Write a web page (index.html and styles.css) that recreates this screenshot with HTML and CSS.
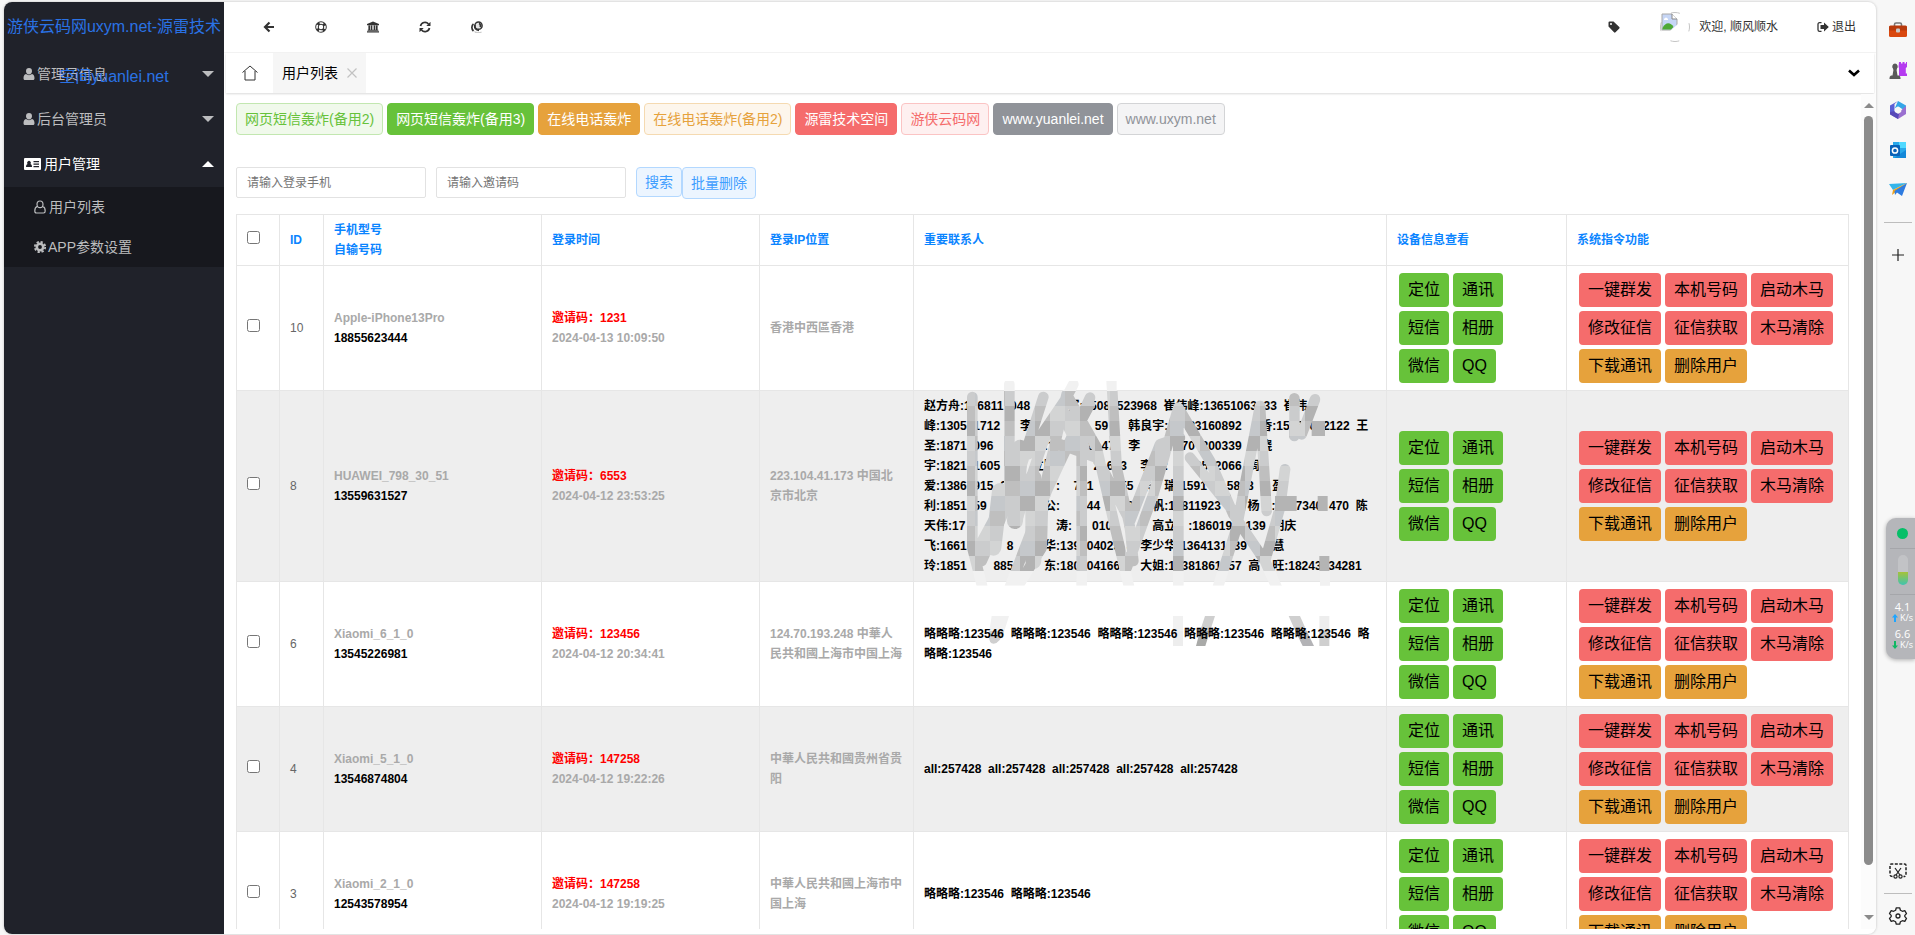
FILE: index.html
```html
<!DOCTYPE html>
<html lang="zh-CN">
<head>
<meta charset="utf-8">
<title>用户列表</title>
<link rel="stylesheet" href="styles.css">
</head>
<body>
<div class="app">
  <aside class="side">
    <div class="logo">游侠云码网uxym.net-源雷技术空间yuanlei.net</div>
    <nav class="menu">
      <a class="item" href="#"><svg class="ico" viewBox="0 0 12 14"><path d="M6 1a3 3.2 0 0 1 3 3.2C9 6 7.700 7.500 6 7.500S3 6 3 4.200A3 3.200 0 0 1 6 1zM3 7c1.800 1.500 4.200 1.500 6 0 1.800.5 2.500 2 2.500 4.200 0 1.300-.7 1.800-1.800 1.800H2.300C1.200 13 .5 12.500.5 11.200.5 9 1.200 7.500 3 7z"/></svg><span>管理员信息</span><i class="tri"></i></a>
      <a class="item" href="#"><svg class="ico" viewBox="0 0 12 14"><path d="M6 1a3 3.2 0 0 1 3 3.2C9 6 7.700 7.500 6 7.500S3 6 3 4.200A3 3.200 0 0 1 6 1zM3 7c1.800 1.500 4.200 1.500 6 0 1.800.5 2.500 2 2.500 4.200 0 1.300-.7 1.800-1.800 1.800H2.300C1.200 13 .5 12.500.5 11.200.5 9 1.200 7.500 3 7z"/></svg><span>后台管理员</span><i class="tri"></i></a>
      <a class="item open" href="#"><svg class="ico wide" viewBox="0 0 17 14"><path fill-rule="evenodd" d="M1 1h15q1 0 1 1v10q0 1-1 1H1q-1 0-1-1V2q0-1 1-1zM2 10h6c0-1.500-.5-2.600-1.500-3a1.900 1.900 0 1 0-3 0C2.500 7.400 2 8.500 2 10zM9.500 4v1.200H15V4zM9.500 6.500v1.200H15V6.500zM9.500 9v1.200H15V9z"/></svg><span>用户管理</span><i class="tri up"></i></a>
      <div class="sub">
        <a href="#"><svg class="ico" viewBox="0 0 12 14"><path fill="none" stroke="currentColor" stroke-width="1.200" d="M6 1c2 0 3 1.400 3 3.200S7.800 7.700 6 7.700 3 6 3 4.200 4 1 6 1zM3.300 6.400C1.500 7 .8 8.500.8 11c0 1.300.6 2 1.700 2h7c1.100 0 1.700-.7 1.700-2 0-2.500-.7-4-2.500-4.600"/></svg><span>用户列表</span></a>
        <a href="#"><svg class="ico" viewBox="0 0 12 14"><circle cx="6" cy="7" r="3.200" fill="none" stroke="currentColor" stroke-width="2.600"/><circle cx="6" cy="7" r="5.200" fill="none" stroke="currentColor" stroke-width="1.800" stroke-dasharray="2.300 1.780"/></svg><span class="near">APP参数设置</span></a>
      </div>
    </nav>
  </aside>
  <main class="main">
    <header class="top">
      <div class="tools">
        <button aria-label="后退"><svg viewBox="0 0 12 12"><path d="M6.500 1.500 2 6l4.500 4.500M2.500 6H11" fill="none" stroke="currentColor" stroke-width="2.200"/></svg></button>
        <button aria-label="帮助"><svg viewBox="0 0 12 12"><circle cx="6" cy="6" r="4" fill="none" stroke="currentColor" stroke-width="3.600"/><circle cx="6" cy="6" r="4" fill="none" stroke="#fff" stroke-width="1.600" stroke-dasharray="3.800 2.483" stroke-dashoffset="1.900"/></svg></button>
        <button aria-label="首页"><svg viewBox="0 0 13 12"><path d="M6.500 0 13 2.800V4H0V2.800zM1.500 4.500h1.800V9H4V4.500h1.800V9h1.400V4.500H9V9h.7V4.500h1.800V9h.8v1H.7V9h.8zM0 10.500h13V12H0z"/></svg></button>
        <button aria-label="刷新"><svg viewBox="0 0 12 12"><path d="M1.500 5A4.600 4.600 0 0 1 9.500 3M10.500 7a4.600 4.600 0 0 1-8 2" fill="none" stroke="currentColor" stroke-width="1.700"/><path d="M11.500.8V5H7.300zM.5 11.200V7h4.200z"/></svg></button>
        <button aria-label="清除"><svg viewBox="0 0 12 12"><path d="M3 9.500q3 2.500 7.500 1v1.500H4z" fill="#ccc"/><circle cx="7.500" cy="4.700" r="3.600" fill="#e6e6e6" stroke="currentColor" stroke-width="1.500"/><path d="M2.500 3C.5 4.500.2 8 2.500 10M4 4C3 7 5 9 8 9.500M8 2.500a2.300 2.300 0 0 1 1 3.500" fill="none" stroke="currentColor" stroke-width="1.700"/></svg></button>
      </div>
      <div class="account">
        <svg class="tag" viewBox="0 0 12 12"><path fill-rule="evenodd" d="M.5 1.500q0-1 1-1h4L11.300 6q.7.800 0 1.500L7.500 11.300q-.7.700-1.500 0L.5 5.500zM3 2a1 1 0 1 0 0 2 1 1 0 0 0 0-2z"/></svg>
        <svg class="avatar" viewBox="0 0 30 30"><circle cx="15" cy="15" r="14.500" fill="none" stroke="#c4c4c4" stroke-dasharray="9 13.780" stroke-dashoffset="4.500"/><path d="M2 2h10l5 5v11H2z" fill="#c6d6f6" stroke="#a8a8a8"/><path d="M12 2v5h5" fill="#fff" stroke="#888"/><path d="M4 7q2-3 4 0v1H4z" fill="#fff"/><path d="M2.500 16c3-6 8-6 11-1L11 17.500H2.500z" fill="#4ea936"/><path d="m10 19 8-7v7z" fill="#fff"/></svg>
        <span class="hello">欢迎, 顺风顺水</span>
        <a class="exit" href="#"><svg viewBox="0 0 12 12"><path d="M4.500 1.700H2.600Q1 1.700 1 3.300v5.400q0 1.600 1.600 1.600h1.900" fill="none" stroke="currentColor" stroke-width="1.300"/><path d="M7 1.500 11.800 6 7 10.500V8H3.500V4H7z"/></svg>退出</a>
      </div>
    </header>
    <div class="tabs">
      <a class="home" href="#" aria-label="主页"><svg viewBox="0 0 16 16"><path d="M.5 7.500 8 1l7.500 6.500M3 6v9h10V6" fill="none" stroke="#333" stroke-width="1"/></svg></a>
      <a class="tab" href="#">用户列表<svg viewBox="0 0 10 10"><path d="m.5.500 9 9M9.500.5l-9 9" stroke="#c2c2c2" stroke-width="1.200"/></svg></a>
      <button class="more" aria-label="更多"><svg viewBox="0 0 12 8"><path d="m1 1.500 5 4.500 5-4.500" fill="none" stroke="#000" stroke-width="2.600"/></svg></button>
    </div>
    <div class="body">
      <div class="content">
        <div class="links">
          <a class="btn green-l" href="#">网页短信轰炸(备用2)</a>
          <a class="btn green" href="#">网页短信轰炸(备用3)</a>
          <a class="btn amber" href="#">在线电话轰炸</a>
          <a class="btn amber-l" href="#">在线电话轰炸(备用2)</a>
          <a class="btn red" href="#">源雷技术空间</a>
          <a class="btn red-l" href="#">游侠云码网</a>
          <a class="btn gray" href="#">www.yuanlei.net</a>
          <a class="btn gray-l" href="#">www.uxym.net</a>
        </div>
        <form class="search">
          <input type="text" aria-label="登录手机" placeholder="请输入登录手机">
          <input type="text" aria-label="邀请码" placeholder="请输入邀请码">
          <div class="pair"><button type="button" class="btn blue-l short">搜索</button><button type="button" class="btn blue-l">批量删除</button></div>
        </form>
        <table class="users">
          <colgroup><col class="c-chk"><col class="c-id"><col class="c-dev"><col class="c-time"><col class="c-ip"><col><col class="c-info"><col class="c-cmd"></colgroup>
          <thead>
            <tr><th><input type="checkbox" aria-label="全选"></th><th>ID</th><th>手机型号<br>自输号码</th><th>登录时间</th><th>登录IP位置</th><th>重要联系人</th><th>设备信息查看</th><th>系统指令功能</th></tr>
          </thead>
          <tbody>
            <tr>
              <td><input type="checkbox" aria-label="选择 10"></td><td class="num">10</td>
              <td>Apple-iPhone13Pro<br><b>18855623444</b></td>
              <td><em>邀请码：1231</em><br>2024-04-13 10:09:50</td>
              <td>香港中西區香港</td>
              <td class="people"></td>
              <td><div class="acts two"><button>定位</button><button>通讯</button><button>短信</button><button>相册</button><button>微信</button><button>QQ</button></div></td>
              <td><div class="acts three"><button>一键群发</button><button>本机号码</button><button>启动木马</button><button>修改征信</button><button>征信获取</button><button>木马清除</button><button class="warn">下载通讯</button><button class="warn">删除用户</button></div></td>
            </tr>
            <tr>
              <td><input type="checkbox" aria-label="选择 8"></td><td class="num">8</td>
              <td>HUAWEI_798_30_51<br><b>13559631527</b></td>
              <td><em>邀请码：6553</em><br>2024-04-12 23:53:25</td>
              <td>223.104.41.173 中国北京市北京</td>
              <td class="people"><div class="lines">赵方舟:1&numsp;6811&numsp;048&numsp;&nbsp; &emsp;&emsp;宴:&numsp;508&numsp;523968&nbsp; 崔伟峰:13651063&numsp;33&nbsp; 崔伟<br>峰:1305&numsp;1712&numsp;&numsp;&nbsp; 李&emsp;:15&numsp;0&numsp;&numsp;&numsp;59&numsp;&numsp;&nbsp; 韩良宇:&numsp;&numsp;&numsp;83160892&nbsp; &emsp;香:15&numsp;7&numsp;0&numsp;2122&nbsp; 王<br>圣:1871&numsp;096&numsp;&numsp;1&nbsp; &emsp;&emsp;:1&numsp;&numsp;&numsp;&numsp;28&numsp;47&numsp;&nbsp; 李&emsp;&emsp;:&numsp;&numsp;70&numsp;200339&nbsp; &emsp;晓<br>宇:1821&numsp;1605&numsp;1&nbsp; &emsp;立鹏:&numsp;&numsp;&numsp;&numsp;&numsp;2&numsp;6&numsp;3&numsp;&nbsp; 李&emsp;:&numsp;&numsp;&numsp;&numsp;35&numsp;2066&nbsp; 周&emsp;<br>爱:1386&numsp;915&numsp;6&numsp;&nbsp; 罗&emsp;&emsp;:&numsp;&numsp;7&numsp;1&numsp;&numsp;3&numsp;55&nbsp; 朱&emsp;瑞:1591&numsp;&numsp;&numsp;58&numsp;8&nbsp; &emsp;盈<br>利:1851&numsp;59&numsp;&numsp;&numsp;5&nbsp; &emsp;&emsp;公:&numsp;&numsp;&numsp;044&numsp;&numsp;&numsp;28&nbsp; &emsp;帆:1&numsp;811923&numsp;&numsp;&numsp;&nbsp; 杨&emsp;:&numsp;5&numsp;7340&numsp;470&nbsp; 陈<br>天伟:17&numsp;&numsp;&numsp;&numsp;&numsp;&numsp;&numsp;&numsp;&numsp;&nbsp; &emsp;&emsp;涛:&numsp;&numsp;&numsp;0101&numsp;&numsp;&numsp;&numsp;&nbsp; 高立&emsp;:186019&numsp;&numsp;139&nbsp; 明庆<br>飞:1661&numsp;&numsp;&numsp;&numsp;1&numsp;8&nbsp; &emsp;&emsp;华:139&numsp;04025&numsp;3&nbsp; 李少华:1364131&numsp;39&numsp;&nbsp; &emsp;慧<br>玲:1851&numsp;6&numsp;&numsp;885&nbsp; &emsp;&emsp;东:180&numsp;04166&numsp;&numsp;&nbsp; 大姐:1&numsp;381861&numsp;57&nbsp; 高&emsp;旺:18243&numsp;34281</div>
                <svg class="mosaic" viewBox="0 0 1500 870" aria-hidden="true">
                  <defs>
                    <pattern id="blocks" width="225" height="180" y="30" patternUnits="userSpaceOnUse" viewBox="0 0 5 4" shape-rendering="crispEdges">
                      <path fill="#cbcccd" d="M0 0h5v4H0z"/>
                      <path fill="#bfbfbf" d="M1 0h1v1H1zM4 1h1v1H4zM2 2h1v1H2zM0 3h1v1H0z"/>
                      <path fill="#d3d4d4" d="M0 1h1v1H0zM3 0h1v1H3zM1 2h1v1H1zM4 3h1v1H4z"/>
                      <path fill="#b2b2b2" d="M2 1h1v1H2zM4 2h1v1H4zM3 3h1v1H3z"/>
                      <path fill="#c5c8cb" d="M0 0h1v1H0zM3 2h1v1H3zM1 3h1v1H1z"/>
                    </pattern>
                    <clipPath id="upper"><path d="M0 30h1500v540H0z"/></clipPath>
                    <clipPath id="fade"><path d="M180 0h470v30H180zM180 570h980v44H180z"/></clipPath>
                    <g id="scrawl" fill="none" stroke-width="32" stroke-linecap="round" stroke-linejoin="round">
                      <path d="M217 48V500L250 630M328 10V330L225 520M325 630 440 330 570 50M430 48 340 330 245 540M500 50 385 220M520 10 430 180 350 420M410 420 500 40 590 200 650 460 690 630M570 70 430 330 425 500 345 630M635 0 650 260 690 440 700 540M545 220V630M480 190 590 230 690 420 780 190 840 170M680 560 760 340 835 80 930 240 1000 400 1095 540 1135 630M835 100V630M870 230 1000 390M950 630 1010 440 1080 75 1100 390M1095 540 1140 380 1155 265"/>
                      <path d="M1183 52V165M1245 55 1205 160"/>
                      <path stroke-width="48" d="M400 290V540M500 110 545 200M300 330 280 500M360 200 345 420"/>
                    </g>
                  </defs>
                  <g clip-path="url(#upper)"><use href="#scrawl" stroke="url(#blocks)"/></g>
                  <g clip-path="url(#fade)"><use href="#scrawl" stroke="#f1f1f1"/></g>
                  <path fill="#b4b4b4" d="M1125 345h65v45h-65zM1253 345h30v45h-30zM1258 525h30v45h-30zM1235 120h40v45h-40z"/>
                  <path fill="#f1f1f1" d="M1260 570h30v44h-30zM819 705h30v45h-30zM275 705h52l-14 45h-45z"/>
                  <path fill="#ededed" d="M1258 705h30v45h-30zM819 750h30v45h-30z"/>
                  <path fill="#cfcfcf" d="M915 705h30l-15 45h-30zM1166 705h34l20 45h-34zM1258 750h30v45h-30zM268 750h45q-14 38-32 38t-13-38z"/>
                  <path fill="#a9aaa8" d="M900 750h30l-14 45h-28z"/>
                  <path fill="#b3b3b6" d="M1186 750h34l22 45h-34z"/>
                </svg>
              </td>
              <td><div class="acts two"><button>定位</button><button>通讯</button><button>短信</button><button>相册</button><button>微信</button><button>QQ</button></div></td>
              <td><div class="acts three"><button>一键群发</button><button>本机号码</button><button>启动木马</button><button>修改征信</button><button>征信获取</button><button>木马清除</button><button class="warn">下载通讯</button><button class="warn">删除用户</button></div></td>
            </tr>
            <tr>
              <td><input type="checkbox" aria-label="选择 6"></td><td class="num">6</td>
              <td>Xiaomi_6_1_0<br><b>13545226981</b></td>
              <td><em>邀请码：123456</em><br>2024-04-12 20:34:41</td>
              <td>124.70.193.248 中華人民共和國上海市中国上海</td>
              <td class="people">略略略:123546&nbsp; 略略略:123546&nbsp; 略略略:123546&nbsp; 略略略:123546&nbsp; 略略略:123546&nbsp; 略略略:123546</td>
              <td><div class="acts two"><button>定位</button><button>通讯</button><button>短信</button><button>相册</button><button>微信</button><button>QQ</button></div></td>
              <td><div class="acts three"><button>一键群发</button><button>本机号码</button><button>启动木马</button><button>修改征信</button><button>征信获取</button><button>木马清除</button><button class="warn">下载通讯</button><button class="warn">删除用户</button></div></td>
            </tr>
            <tr>
              <td><input type="checkbox" aria-label="选择 4"></td><td class="num">4</td>
              <td>Xiaomi_5_1_0<br><b>13546874804</b></td>
              <td><em>邀请码：147258</em><br>2024-04-12 19:22:26</td>
              <td>中華人民共和國贵州省贵阳</td>
              <td class="people">all:257428&nbsp; all:257428&nbsp; all:257428&nbsp; all:257428&nbsp; all:257428</td>
              <td><div class="acts two"><button>定位</button><button>通讯</button><button>短信</button><button>相册</button><button>微信</button><button>QQ</button></div></td>
              <td><div class="acts three"><button>一键群发</button><button>本机号码</button><button>启动木马</button><button>修改征信</button><button>征信获取</button><button>木马清除</button><button class="warn">下载通讯</button><button class="warn">删除用户</button></div></td>
            </tr>
            <tr>
              <td><input type="checkbox" aria-label="选择 3"></td><td class="num">3</td>
              <td>Xiaomi_2_1_0<br><b>12543578954</b></td>
              <td><em>邀请码：147258</em><br>2024-04-12 19:19:25</td>
              <td>中華人民共和國上海市中国上海</td>
              <td class="people">略略略:123546&nbsp; 略略略:123546</td>
              <td><div class="acts two"><button>定位</button><button>通讯</button><button>短信</button><button>相册</button><button>微信</button><button>QQ</button></div></td>
              <td><div class="acts three"><button>一键群发</button><button>本机号码</button><button>启动木马</button><button>修改征信</button><button>征信获取</button><button>木马清除</button><button class="warn">下载通讯</button><button class="warn">删除用户</button></div></td>
            </tr>
          </tbody>
        </table>
      </div>
      <div class="scroll"><i class="arrow"></i><div class="track"><div class="thumb"></div></div><i class="arrow down"></i></div>
    </div>
  </main>
</div>
<aside class="rail">
  <svg viewBox="0 0 20 20"><path d="M6.500 6V4.500Q6.500 3 8 3h4q1.500 0 1.500 1.500V6" fill="none" stroke="#777" stroke-width="1.600"/><rect x="1" y="6" width="18" height="11" rx="1.500" fill="#d9480f"/><path d="M1 7q0-1.500 1.500-1.500h15Q19 5.500 19 7v3.500H1z" fill="#b93a0c"/><rect x="8" y="8.500" width="4" height="4" rx="1" fill="#c9c9c9"/></svg>
  <svg viewBox="0 0 20 20"><path d="M11 2h2v1.500h1.500V2h2v1.500H18V2h1v5l-1.200 1v5.500H19V16h-8V8l-.5-1z" fill="#b53bf0"/><path d="M7 3.500a3 3 0 0 1 2 5v1H8.500l1 6H11q1.500.5 1.500 2.500v1h-11v-1Q1.500 16 3 15.500h1.500l1-6H5v-1a3 3 0 0 1 2-5z" fill="#5a5a5a"/></svg>
  <svg viewBox="0 0 20 20"><path d="M10 1 18 5.500V10l-5-1.500L10 6.500 6.500 9z" fill="#34a6e8"/><path d="M10 1 6.500 4v8L5 16l-3-2.500v-8z" fill="#5c5fd6"/><path d="M18 6v8l-8 5-5-3 6-3 3.500-4z" fill="#9a70d0"/><path d="M2 12l5-1 4 3-1 5-8-4.500z" fill="#5748b8"/><path d="m10 6.500 3.200 1.800v3.600L10 13.800l-3.200-1.900V8.300z" fill="#f7f7f7"/></svg>
  <svg viewBox="0 0 20 20"><path d="M5 2h13v16H5z" fill="#28a8ea"/><path d="M11 2h7v6h-7z" fill="#50d9ff"/><path d="M18 10v8H6z" fill="#1488d8"/><rect x="2" y="5" width="10" height="11" rx="1" fill="#0a62b8"/><circle cx="7" cy="10.500" r="2.600" fill="none" stroke="#fff" stroke-width="1.500"/></svg>
  <svg viewBox="0 0 20 20"><path d="m1 4 18-1-14 7z" fill="#35b5ea"/><path d="M19 3 5 10l-1 5z" fill="#f0a21c"/><path d="m19 3-5 13-5-3.500L7 15l-.5-4z" fill="#2d7be0"/></svg>
  <hr>
  <svg viewBox="0 0 20 20"><path d="M10 4v12M4 10h12" stroke="#222" stroke-width="1.200"/></svg>
  <svg class="shot" viewBox="0 0 20 20"><path d="M4.500 15.500Q2 15.500 2 13.500V4.500Q2 3 3.500 3h13Q18 3 18 4.500v9q0 2-2.500 2" fill="none" stroke="#222" stroke-width="1.500" stroke-dasharray="3 1.500"/><path d="m7 7 5 7M13 7l-5 7" stroke="#222" stroke-width="1.200"/><g fill="none" stroke="#222" stroke-width="1.200"><circle cx="7.500" cy="15.500" r="1.600"/><circle cx="12.500" cy="15.500" r="1.600"/></g></svg>
  <hr>
  <svg viewBox="0 0 20 20"><path d="M8.300 1.800h3.400l.7 2.400 2 1.100 2.400-.6 1.700 2.900-1.700 1.800v1.200l1.700 1.800-1.700 2.900-2.400-.6-2 1.100-.7 2.400H8.300l-.7-2.400-2-1.100-2.400.6-1.700-2.900 1.700-1.800V9.400L1.500 7.600l1.700-2.900 2.400.6 2-1.100z" fill="none" stroke="#222" stroke-width="1.300" stroke-linejoin="round"/><circle cx="10" cy="10" r="2" fill="none" stroke="#222" stroke-width="1.300"/></svg>
</aside>
<div class="meter">
  <i class="dot"></i><i class="line"></i><i class="tube"></i><i class="line"></i>
  <div class="speed">4.1<small><svg viewBox="0 0 6 8"><path d="m3 0 3 3.500H4V8H2V3.500H0z" fill="#1ea5ff"/></svg>K/s</small></div>
  <div class="speed">6.6<small><svg viewBox="0 0 6 8"><path d="m3 8 3-3.500H4V0H2v4.500H0z" fill="#0fb862"/></svg>K/s</small></div>
</div>
</body>
</html>
```

FILE: styles.css
```css
* { box-sizing: border-box; }
body {
  margin: 0;
  height: 100vh;
  display: flex;
  overflow: hidden;
  background: #f7f7f7;
  color: #333;
  font: 14px/20px "Liberation Sans", "Noto Sans CJK SC", sans-serif;
}
a { color: inherit; text-decoration: none; }
button { font: inherit; cursor: pointer; }
svg { display: block; fill: currentColor; }

.app {
  flex: 1;
  min-width: 0;
  display: flex;
  margin: 2px 0 1px 4px;
  overflow: hidden;
  background: #fff;
  border-radius: 8px;
  box-shadow: 0 0 2px 1px #dcdcdc;
}

/* Sidebar */
.side { width: 220px; flex: none; background: #20222a; color: #bcbdbf; }
.logo {
  height: 50px;
  font-size: 16px;
  line-height: 50px;
  text-align: center;
  color: #2a72e5;
  position: relative;
  z-index: 1;
}
.item { display: flex; align-items: center; gap: 1px; height: 45px; padding: 0 10px 2px 19px; }
.item .tri { margin-left: auto; }
.item.open { color: #fff; }
.ico { width: 12px; height: 14px; }
.item .ico { margin: 0 1px 0 0; }
.ico.wide { width: 17px; }
.item .wide { margin: 0 2px 0 1px; }
.tri { border: 6px solid transparent; border-top-color: currentColor; border-bottom: 0; }
.tri.up { border-top: 0; border-bottom: 6px solid #fff; }
.sub { background: #17181e; }
.sub a { display: flex; align-items: center; gap: 3px; height: 40px; padding-left: 30px; }
.sub .near { margin-left: -1px; }

/* Header */
.main { flex: 1; min-width: 0; display: flex; flex-direction: column; padding-bottom: 5px; }
.top {
  display: flex;
  justify-content: space-between;
  align-items: center;
  height: 51px;
  padding: 0 20px 1px 19px;
  border-bottom: 1px solid #f4f4f4;
  font-size: 12px;
}
.tools { display: flex; }
.tools button { width: 52px; height: 40px; padding: 0 20px; border: 0; background: none; color: #333; }
.tools svg { width: 12px; height: 12px; }
.account { display: flex; align-items: center; }
.tag { width: 12px; height: 12px; margin-right: 40px; }
.avatar { width: 30px; height: 30px; margin-right: 9px; }
.exit { display: flex; align-items: center; gap: 3px; margin-left: 39px; }
.exit svg { width: 12px; height: 12px; }

.tabs {
  display: flex;
  align-items: center;
  height: 40px;
  flex: none;
  margin: 0 2px;
  box-shadow: 0 1px 2px rgba(0, 0, 0, .15);
}
.home { width: 47px; padding: 0 16px; }
.home svg { width: 16px; height: 16px; }
.tab {
  display: flex;
  align-items: center;
  gap: 9px;
  height: 100%;
  padding: 0 9px;
  background: #f6f6f6;
  color: #000;
}
.tab svg { width: 10px; height: 10px; }
.more { width: 40px; height: 40px; margin-left: auto; padding: 0 14px; border: 0; background: none; }
.more svg { width: 12px; height: 8px; }

/* Content */
.body { flex: 1; min-height: 0; display: flex; }
.content { flex: 1; min-width: 0; overflow: hidden; padding: 10px 12px 0; }
.links { display: flex; gap: 4px; }
.btn {
  height: 32px;
  padding: 0 8px;
  border: 1px solid;
  border-radius: 4px;
  line-height: 30px;
  white-space: nowrap;
}
.green { background: #67c23a; border-color: #67c23a; color: #fff; }
.green-l { background: #f0f9eb; border-color: #c2e7b0; color: #67c23a; }
.amber { background: #e6a23c; border-color: #e6a23c; color: #fff; }
.amber-l { background: #fdf6ec; border-color: #f5dab1; color: #e6a23c; }
.red { background: #f56c6c; border-color: #f56c6c; color: #fff; }
.red-l { background: #fef0f0; border-color: #fbc4c4; color: #f56c6c; }
.gray { background: #909399; border-color: #909399; color: #fff; }
.gray-l { background: #f4f4f5; border-color: #d3d4d6; color: #909399; }
.blue-l { background: #ecf5ff; border-color: #b3d8ff; color: #409eff; }

.search { display: flex; gap: 10px; height: 47px; margin-top: 32px; }
.search input {
  width: 190px;
  height: 31px;
  padding: 0 10px;
  border: 1px solid #e2e2e2;
  border-radius: 2px;
  font: 12px "Liberation Sans", "Noto Sans CJK SC", sans-serif;
}
.search input::placeholder { color: #757575; }
.pair { display: flex; }
.short { height: 30px; line-height: 28px; }

/* Table */
.users { width: 100%; table-layout: fixed; border-collapse: collapse; font-size: 12px; font-weight: bold; }
.c-chk { width: 43px; }
.c-id { width: 44px; }
.c-dev, .c-time { width: 218px; }
.c-ip { width: 154px; }
.c-info { width: 180px; }
.c-cmd { width: 282px; }
.users th, .users td {
  padding: 5px 10px;
  border: 1px solid #e6e6e6;
  text-align: left;
  vertical-align: middle;
}
.users th { color: #0a84ff; }
.users td { color: #a9a9a9; }
.users tbody tr:nth-child(even) { background: #eee; }
.users input { display: block; width: 13px; height: 13px; margin: 0 0 6px; }
.users td.num { color: #666; font-weight: normal; }
.users b { color: #000; }
.users em { color: #f00; font-style: normal; }
.users td.people { position: relative; color: #000; }
.lines { white-space: nowrap; }
.mosaic { position: absolute; left: -14px; top: -10px; width: 500px; height: 290px; pointer-events: none; }
.acts { display: grid; gap: 4px; padding: 2px; justify-content: start; justify-items: start; }
.two { grid-template-columns: repeat(2, auto); }
.three { grid-template-columns: repeat(3, auto); }
.acts button {
  height: 34px;
  padding: 0 9px;
  border: 0;
  border-radius: 4px;
  font-size: 16px;
  font-weight: normal;
  white-space: nowrap;
  color: #000;
}
.two button { background: #67c23a; }
.three button { background: #f56c6c; }
.three .warn { background: #e6a23c; }

/* Scrollbar */
.scroll {
  width: 15px;
  flex: none;
  display: flex;
  flex-direction: column;
  align-items: center;
  margin-top: 1px;
  padding: 9px 0;
  background: #fcfcfc;
}
.track { flex: 1; margin: 8px 0 50px; display: flex; }
.thumb { width: 9px; border-radius: 5px; background: #8b8b8b; }
.arrow { border: 5px solid transparent; border-top: 0; border-bottom-color: #8b8b8b; }
.arrow.down { border-top: 5px solid #8b8b8b; border-bottom: 0; }

/* Browser rail */
.rail {
  width: 39px;
  flex: none;
  display: flex;
  flex-direction: column;
  align-items: center;
  gap: 20px;
  padding: 20px 0 9px 5px;
}
.rail svg { width: 20px; height: 20px; }
.rail hr { width: 28px; margin: 2px 0; border: 0; border-top: 1px solid #bdbdbd; }
.rail .shot { margin-top: auto; }
.rail .shot ~ hr { margin: -8px 0; }

.meter {
  position: absolute;
  right: 0;
  top: 518px;
  width: 29px;
  display: flex;
  flex-direction: column;
  align-items: center;
  padding: 10px 0 4px 4px;
  border-radius: 10px 0 0 10px;
  background: #b5b6ba;
  box-shadow: 0 1px 4px rgba(0, 0, 0, .3);
  color: #fff;
  font: 11px/12px "Open Sans", sans-serif;
}
.dot { width: 11px; height: 11px; border-radius: 50%; background: #05bf68; }
.line { width: 100%; height: 1px; margin: 9px 0 6px; background: #a5a6aa; }
.tube {
  width: 10px;
  height: 30px;
  border-radius: 5px;
  background: linear-gradient(#c2c3c6 57%, #a5c23a 57%, #3fc4b0);
}
.speed { height: 27px; text-align: center; }
.speed small { display: flex; align-items: center; gap: 2px; font-size: 9px; line-height: 9px; }
.speed svg { width: 6px; height: 8px; }
```
